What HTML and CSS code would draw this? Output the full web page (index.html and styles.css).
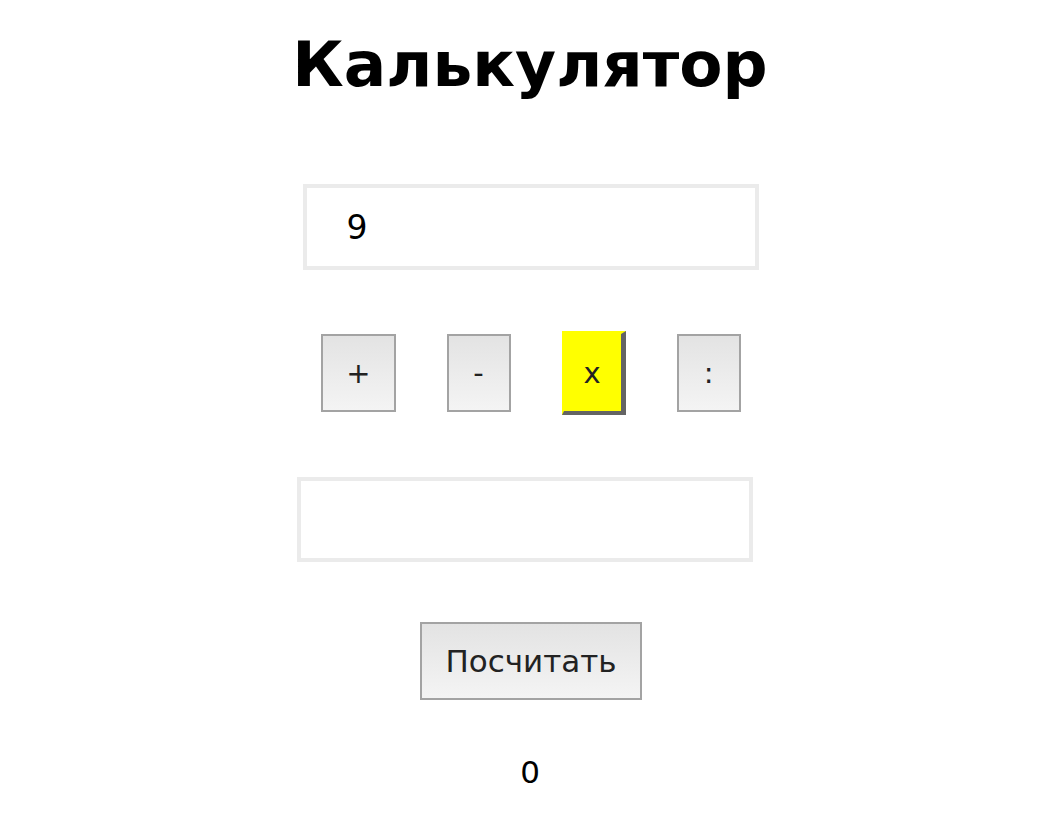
FILE: index.html
```html
<!DOCTYPE html>
<html lang="ru">
<head>
    <meta charset="UTF-8">
    <meta name="viewport" content="width=device-width, initial-scale=1.0">
    <title>Калькулятор</title>
    <link rel="stylesheet" href="styles.css">
</head>
<body>
    <div class="calc">
        <h1>Калькулятор</h1>
        <input type="text" id="first" class="field first" value="9">
        <div class="ops">
            <button class="op">+</button>
            <button class="op">-</button>
            <button class="op selected">x</button>
            <button class="op">:</button>
        </div>
        <input type="text" id="second" class="field second">
        <button class="run">Посчитать</button>
        <p class="result" id="result">0</p>
    </div>
</body>
</html>
```

FILE: styles.css
```css
body { margin: 0; font-family: "DejaVu Sans", Verdana, sans-serif; background: #fff; }
.calc { display: flex; flex-direction: column; align-items: center; }
h1 { font-size: 63px; font-weight: bold; margin: 28px 0 0 6px; }
.field { box-sizing: border-box; width: 456px; height: 86px; border: 4px solid #ebebeb; padding: 0 40px; font-family: inherit; font-size: 33px; color: #000; outline: none; }
.field.first { margin: 83px 0 0 7px; }
.field.second { margin: 0 5px 0 0; height: 85px; }
.ops { display: flex; align-items: center; gap: 51px; margin: 61px 0 62px 8px; }
.op, .run { font-family: inherit; color: #222; border: 2px solid #a3a3a3; background: linear-gradient(#e3e3e3, #f4f4f4); }
.op { box-sizing: border-box; min-width: 64px; height: 78px; font-size: 29px; padding: 0 23px; }
.op.selected { min-width: 0; height: 84px; padding: 0 20px; background: #ffff00; border-width: 3px 5px 4px 2px; border-color: transparent #646464 #646464 transparent; }
.run { height: 78px; font-size: 31px; padding: 0 23px; margin: 60px 0 0 8px; }
.result { font-size: 31px; margin: 54px 0 0 6px; }
```
